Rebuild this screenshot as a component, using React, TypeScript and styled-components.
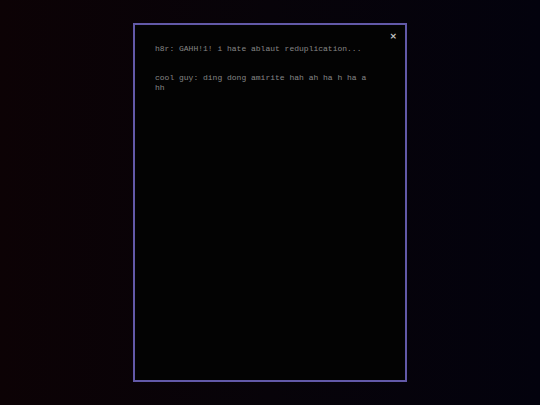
import styled, { createGlobalStyle } from "styled-components";

const GlobalStyle = createGlobalStyle`
  html, body {
    margin: 0;
    padding: 0;
    height: 100%;
  }
  #root {
    height: 100%;
  }
`;

const Page = styled.div`
  height: 100vh;
  width: 100vw;
  display: flex;
  justify-content: center;
  align-items: center;
  background: linear-gradient(90deg, #0c0205 0%, #070309 50%, #03020d 100%);
`;

const Panel = styled.div`
  position: relative;
  box-sizing: border-box;
  width: 274px;
  height: 359px;
  border: 2px solid #6259a8;
  background: #030303;
  padding: 19px 30px 0 20px;
  font-family: "Liberation Mono", "Courier New", monospace;
  font-size: 8px;
  line-height: 10px;
  color: #868686;
`;

const CloseButton = styled.button`
  position: absolute;
  top: 7px;
  right: 8px;
  border: none;
  background: none;
  padding: 0;
  color: #c4c4c4;
  font-family: "DejaVu Sans", sans-serif;
  font-size: 9px;
  font-weight: bold;
  line-height: 9px;
  cursor: pointer;
`;

const Line = styled.p`
  margin: 0 0 19px 0;
`;

const lines = [
  "h8r: GAHH!1! i hate ablaut reduplication...",
  "cool guy: ding dong amirite hah ah ha h ha a hh",
];

function App() {
  return (
    <>
      <GlobalStyle />
      <Page>
        <Panel>
          <CloseButton>×</CloseButton>
          {lines.map((l) => (
            <Line key={l}>{l}</Line>
          ))}
        </Panel>
      </Page>
    </>
  );
}

export default App;
